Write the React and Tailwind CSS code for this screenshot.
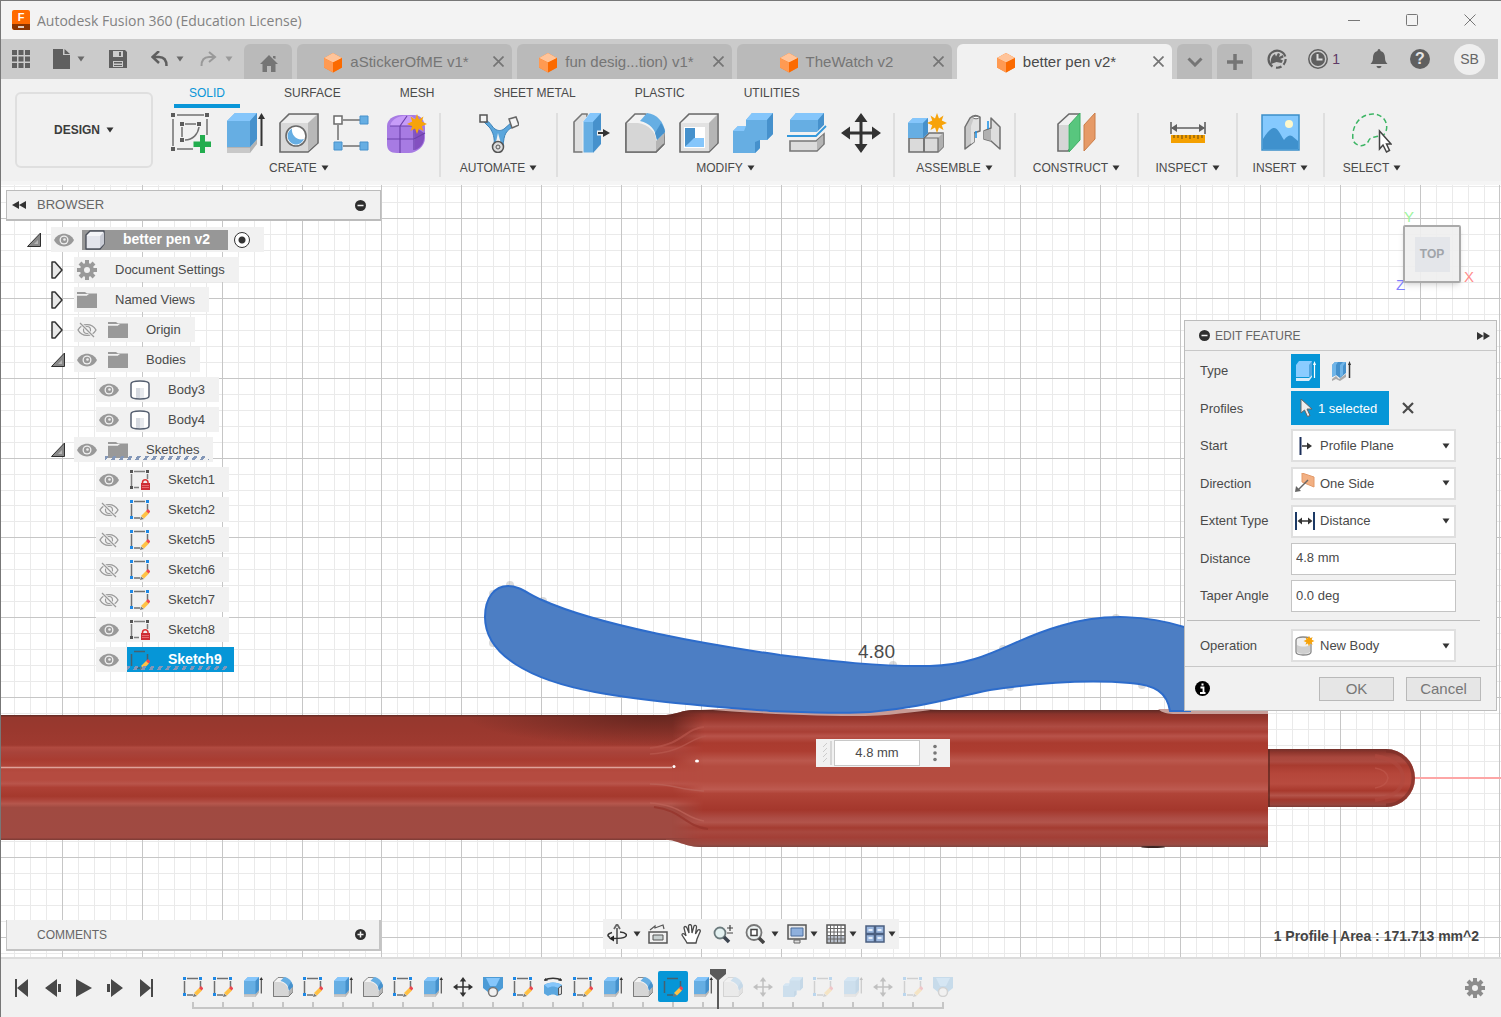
import React from "react";

const FONT = "font-['Liberation_Sans',Arial,sans-serif]";

/* ---------- small shared glyphs ---------- */

const Svg = ({ w = 20, h = 20, vb, children, className = "" }) => (
  <svg
    width={w}
    height={h}
    viewBox={vb || `0 0 ${w} ${h}`}
    fill="none"
    aria-hidden="true"
    className={`shrink-0 ${className}`}
  >
    {children}
  </svg>
);

const Caret = ({ color = "#333" }) => (
  <Svg w={8} h={6}>
    <path d="M.5.500H7.500L4 5.500Z" fill={color} />
  </Svg>
);

const Star = ({ x, y, s = 1 }) => (
  <path
    transform={`translate(${x} ${y}) scale(${s})`}
    d="M0-10 2-4.5 6.5-7.5 4.8-2.5 10 0 4.8 2.2 6.5 7 2 4.6 0 10-2 4.6-6.5 7-4.8 2.2-10 0-4.8-2.5-6.5-7.5-2-4.5Z"
    fill="#f7a30a"
  />
);

const Cube = () => (
  <Svg w={18} h={20}>
    <path d="M9 0 18 5V14.500L9 19.500 0 14.500V5Z" fill="#ff7a1a" />
    <path d="M9 0 18 5 9 9.500 0 5Z" fill="#ffc49a" />
    <path d="M0 5 9 9.500V19.500L0 14.500Z" fill="#ff9a52" />
    <path d="M18 5 9 9.500V19.500L18 14.500Z" fill="#fb6a00" />
  </Svg>
);

const Eye = () => (
  <Svg h={14}>
    <path d="M0 7C4-1.500 16-1.500 20 7 16 15.500 4 15.500 0 7Z" fill="#999" />
    <circle cx="10" cy="7" r="4.500" fill="#f1f1f1" />
    <circle cx="10" cy="7" r="3.200" fill="#999" />
    <circle cx="10.500" cy="6.500" r="1.300" fill="#eee" />
  </Svg>
);

const EyeOff = () => (
  <Svg h={16}>
    <path d="M1 8C5 .8 15 .8 19 8 15 15.200 5 15.200 1 8Z" stroke="#999" strokeWidth="1.300" />
    <circle cx="10" cy="8" r="3.500" stroke="#999" strokeWidth="1.200" />
    <path d="M3 1 17 15" stroke="#f1f1f1" strokeWidth="3" />
    <path d="M3 1 17 15" stroke="#999" strokeWidth="1.200" />
  </Svg>
);

const Folder = () => (
  <Svg h={16}>
    <path d="M0 0H8L10 1.500H20V16H0V3.500H10L12 2H0Z" fill="#999" />
    <path d="M0 3H10" stroke="#f1f1f1" />
  </Svg>
);

const Gear = ({ color = "#999" }) => (
  <Svg>
    <g stroke={color} strokeWidth="4">
      <path d="M10 0V20M0 10H20M3 3 17 17M17 3 3 17" />
    </g>
    <circle cx="10" cy="10" r="7" fill={color} />
    <circle cx="10" cy="10" r="3" fill="#f1f1f1" />
  </Svg>
);

const BodyIcon = () => (
  <Svg>
    <path d="M1 4C1 2 5 1 10 1S19 2 19 4V16C19 18 15 19 10 19S1 18 1 16Z" fill="#fff" stroke="#555f70" strokeWidth="1.500" />
    <path d="M6 8H10V18H6Z" fill="#d5d9e0" />
    <path d="M10 8H14V18H10Z" fill="#e8eaee" />
  </Svg>
);

const ComponentIcon = () => (
  <Svg>
    <path d="M1 5 5 1H19V14L15 19H1Z" fill="#f4f5f8" stroke="#4a4f5a" strokeWidth="1.400" strokeLinejoin="round" />
    <path d="M2 6H15V18H2Z" fill="#e3e5ec" />
    <path d="M15 6 19 2V14L15 18Z" fill="#c9ccd5" />
  </Svg>
);

const SketchIcon = ({ selected = false }) => (
  <Svg>
    <path d="M4 1.500H15M1.500 4V16M17.500 4V10M4 18H10" stroke={selected ? "#46616f" : "#707070"} strokeWidth="1.500" />
    {!selected && <path d="M0 0H3V3H0ZM16 0H19V3H16ZM0 16H3V19H0Z" fill="#1e88e5" />}
    <path d="M10 20 11 16.500 14 19Z" fill="#777" />
    <path d="M11 16 16.500 10.500 19 13.500 14 18.500Z" fill="#ffc145" />
    <path d="M16 11 18 9 20.500 11.500 18.500 13.500Z" fill="#ee4650" />
  </Svg>
);

const LockedSketch = () => (
  <Svg>
    <path d="M4 1.500H15M1.500 4V16M17.500 4V9M4 17.500H9" stroke="#808080" strokeWidth="1.500" />
    <path d="M0 0H3V3H0ZM16 0H19V3H16ZM0 16H3V19H0Z" fill="#555" />
    <path d="M12.500 14V12a2.800 2.800 0 0 1 5.500 0v2" stroke="#d33" strokeWidth="1.500" />
    <rect x="11" y="13" width="9" height="7" fill="#cc2f36" />
    <path d="M12 15.500H19M12 17.500H19" stroke="#e76b70" />
  </Svg>
);

const ClosedArrow = () => (
  <Svg w={12} h={18}>
    <path d="M1 1H4L11 9 4 17H1Z" fill="#e8e8e8" stroke="#333" strokeWidth="1.500" strokeLinejoin="round" />
  </Svg>
);

const OpenArrow = () => (
  <Svg w={14} h={15}>
    <path d="M13.500 1V14.500H.5Z" fill="#888" stroke="#2f2f2f" strokeWidth="1" strokeLinejoin="round" />
    <path d="M11 8V12H7Z" fill="#b5b5b5" />
  </Svg>
);

const RoundSign = ({ plus }) => (
  <Svg w={11} h={11}>
    <circle cx="5.500" cy="5.500" r="5.500" fill="#2e2e2e" />
    <path d={plus ? "M2.500 5.500H8.500M5.500 2.500V8.500" : "M2.500 5.500H8.500"} stroke="#f1f1f1" strokeWidth="1.500" />
  </Svg>
);

/* ---------- modelling icons (40 x 40 artwork) ---------- */

const art = {
  sketch: (
    <>
      <path d="M6 2H33M2 6V33M36 6V22M6 36H22" stroke="#707070" strokeWidth="1.500" />
      <path d="M0 0H4V4H0ZM34 0H38V4H34ZM0 34H4V38H0ZM9 9H13V13H9ZM26 9H30V13H26ZM9 25H13V29H9Z" fill="#5c5c5c" />
      <path d="M14 11H25M11 14V24M28 14C27 21 22 27 14 27" stroke="#707070" strokeWidth="1.500" />
      <path d="M29 22H34V28.500H40V34H34V40H29V34H22.500V28.500H29Z" fill="#22ad4e" />
    </>
  ),
  extrude: (
    <g transform="translate(2 0)">
      <path d="M0 34H23L30 26V31L23 40H0Z" fill="#b3b3b3" />
      <path d="M0 35H23V40H0Z" fill="#c8c8c8" />
      <path d="M0 8 8 0H30V26L23 34H0Z" fill="#66aee3" />
      <path d="M0 8 8 0H30L23 8Z" fill="#85c6fb" />
      <path d="M23 8 30 0V26L23 34Z" fill="#4691cc" />
      <path d="M34.500 5V33" stroke="#333" strokeWidth="2" />
      <path d="M34.500 0 38 6H31Z" fill="#333" />
    </g>
  ),
  hole: (
    <>
      <path d="M1 10 10 1H39V30L29 39H1Z" fill="#d8d8d8" stroke="#6a6a6a" strokeWidth="1.600" />
      <path d="M2 10 11 2H37L29 10Z" fill="#efefef" />
      <path d="M29 10 38 2V30L29 38Z" fill="#b8b8b8" />
      <circle cx="17" cy="23" r="10" fill="#fff" stroke="#6a6a6a" strokeWidth="1.600" />
      <path d="M13 15.500A8.500 8.500 0 1 0 25 26C18 28 12 22 13 15.500Z" fill="#66aee3" />
    </>
  ),
  pattern: (
    <>
      <path d="M10 7H27M5 12V27M10 33H27" stroke="#707070" strokeWidth="1.500" />
      <rect x="1" y="3" width="8" height="8" stroke="#6a6a6a" strokeWidth="1.500" fill="#fff" />
      <path d="M27 3H35V11H27ZM1 29H9V37H1ZM27 29H35V37H27Z" fill="#66aee3" stroke="#4691cc" />
    </>
  ),
  form: (
    <>
      <path d="M0 13C0 7 6 2 14 2H27C34 2 38 8 38 15V25C38 33 30 40 22 40H10C3 40 0 37 0 31Z" fill="#a77be3" />
      <path d="M4 10C8 4 14 2 24 3L32 9 26 13H3Z" fill="#c79cf8" />
      <path d="M28 14 37 20V26C36 32 33 35 28 37Z" fill="#8350c0" />
      <path d="M0 26H27L38 20M13 13V40M3 13H27V37M13 13 20 3" stroke="#6d42ab" strokeWidth="1.200" />
      <Star x={30} y={11} />
    </>
  ),
  automate: (
    <>
      <path d="M6 6C12 10 13 14 16 16 19 18 22 18 25 16L33 9 35 13C27 18 25 20 24 34L15 34C16 24 14 20 11 15L4 8Z" fill="#5ba6dc" stroke="#3d83b8" strokeWidth="1" />
      <path d="M19 20 21.500 29H17Z" fill="#f1f1f1" />
      <rect x="1" y="2" width="7" height="7" fill="#f5f5f5" stroke="#555" strokeWidth="1.500" />
      <path d="M30 6 37 4 40 12 33 15Z" fill="#f5f5f5" stroke="#666" strokeWidth="1.500" />
      <circle cx="19" cy="34" r="5.500" fill="#ddd" stroke="#555" strokeWidth="1.500" />
      <circle cx="19" cy="34" r="2" stroke="#555" />
    </>
  ),
  press: (
    <g transform="translate(2 0)">
      <path d="M1 9 9 1H14V39H1Z" fill="#e0e0e0" stroke="#777" strokeWidth="1.600" />
      <path d="M10 9 17 0H28V31L20 40H10Z" fill="#66aee3" stroke="#f1f1f1" />
      <path d="M10 9 17 0H28L20 9Z" fill="#85c6fb" />
      <path d="M20 9 28 0V31L20 40Z" fill="#4691cc" />
      <path d="M24 20H32" stroke="#f1f1f1" strokeWidth="5" />
      <path d="M25 20H31" stroke="#333" strokeWidth="2" />
      <path d="M30 16 37 20 30 24Z" fill="#333" />
    </g>
  ),
  fillet: (
    <>
      <path d="M1 10 10 1H20C32 3 39 12 39 24V31L31 39H1Z" fill="#f3f3f3" stroke="#6f6f6f" strokeWidth="1.600" />
      <path d="M1 10H13C23 11 31 19 31 27V39H1Z" fill="#d6d6d6" />
      <path d="M31 28 39 20V31L31 39Z" fill="#b5b5b5" />
      <path d="M15 8 22 0C32 1 39 9 40 19L32 27C31 17 25 10 15 8Z" fill="#66aee3" />
      <path d="M36 10C38 13 40 16 40 19L32 27 30 20Z" fill="#4691cc" />
      <path d="M1 10V39H31L39 31" stroke="#6f6f6f" strokeWidth="1.600" />
    </>
  ),
  shell: (
    <>
      <path d="M1 10 10 1H39V30L30 39H1Z" fill="#e2e2e2" stroke="#6a6a6a" strokeWidth="1.600" />
      <path d="M2 10 11 2H37L30 10Z" fill="#f2f2f2" />
      <path d="M30 10 38 2V30L30 38Z" fill="#b5b5b5" />
      <path d="M5 14H26V35H5Z" fill="#fff" />
      <path d="M6 15H16V26L6 34Z" fill="#4691cc" />
      <path d="M6 34 15 25H25V34Z" fill="#85c6fb" />
    </>
  ),
  combine: (
    <>
      <path d="M0 18 5 13H13V7L19 0H40V21L34 27H27V35L22 40H0Z" fill="#66aee3" />
      <path d="M13 7 19 0H40L34 7ZM0 18 5 13H13L11 18Z" fill="#85c6fb" />
      <path d="M34 7 40 0V21L34 27ZM22 29 27 27V35L22 40Z" fill="#4691cc" />
    </>
  ),
  split: (
    <>
      <path d="M3 7 9 0H37V13L31 19H3Z" fill="#66aee3" />
      <path d="M3 7 9 0H37L31 7Z" fill="#85c6fb" />
      <path d="M31 7 37 0V13L31 19Z" fill="#4691cc" />
      <path d="M0 23H29L39 13" stroke="#f1f1f1" strokeWidth="4.500" />
      <path d="M0 23H29L39 13" stroke="#3498db" strokeWidth="1.800" />
      <path d="M3 28H29L37 21V31L30 38H3Z" fill="#dcdcdc" stroke="#777" strokeWidth="1.600" />
      <path d="M30 28 36 22V31L30 37Z" fill="#b5b5b5" />
    </>
  ),
  move: (
    <>
      <path d="M20 6V34M6 20H34" stroke="#333" strokeWidth="3" />
      <path d="M20 0 26.500 9H13.500ZM20 40 13.500 31H26.500ZM0 20 9 13.500V26.500ZM40 20 31 26.500V13.500Z" fill="#333" />
    </>
  ),
  assemble: (
    <>
      <path d="M1 25H16V39H1ZM16 25 21 20H35V34L30 39H16Z" fill="#dadada" stroke="#6f6f6f" strokeWidth="1.600" />
      <path d="M30 25 35 20V34L30 39Z" fill="#b0b0b0" />
      <path d="M16 25V39M17 25H30V39" stroke="#6f6f6f" strokeWidth="1.200" />
      <path d="M0 10 5 5H20V20L15 25H0Z" fill="#66aee3" />
      <path d="M0 10 5 5H20L15 10Z" fill="#85c6fb" />
      <path d="M15 10 20 5V20L15 25Z" fill="#4691cc" />
      <Star x={29} y={10} />
    </>
  ),
  joint: (
    <>
      <path d="M3 14 8 5C11 2 15 2 18 4V18L12 20V29L3 36Z" fill="#c9c9c9" stroke="#707070" strokeWidth="1.500" strokeLinejoin="round" />
      <path d="M9 13 12 5 17 4V17L12 19V29L9 31Z" fill="#e2e2e2" />
      <ellipse cx="14" cy="4.500" rx="3" ry="1.300" fill="#fff" stroke="#707070" />
      <path d="M22 18 29 15V5L38 14V36L29 28 22 26Z" fill="#dedede" stroke="#707070" strokeWidth="1.500" strokeLinejoin="round" />
      <path d="M22 18 29 16V28L22 26Z" fill="#b0b0b0" />
      <path d="M26 8V16M14 18V25" stroke="#2294e6" strokeWidth="1.600" />
    </>
  ),
  construct: (
    <>
      <path d="M1 11 12 1H22V26L11 38H1Z" fill="#f0f0f0" stroke="#6a6a6a" strokeWidth="1.600" />
      <path d="M2 12H11V37H2Z" fill="#d6d6d6" />
      <path d="M12 12 23 0V27L12 39Z" fill="#58c67e" stroke="#3cae62" />
      <path d="M27 12 38 0V26L27 38Z" fill="#e69a67" stroke="#ca7d48" />
    </>
  ),
  inspect: (
    <>
      <path d="M3 9V21M37 9V21M4 15H36" stroke="#606060" strokeWidth="1.600" />
      <path d="M3 15 9 11V19ZM37 15 31 11V19Z" fill="#606060" />
      <path d="M3 22H37V30H3Z" fill="#f4a000" />
      <path d="M6 22V25M10 22V25M14 22V26M18 22V25M22 22V26M26 22V25M30 22V26M34 22V25" stroke="#7c5710" strokeWidth="1.200" />
    </>
  ),
  insert: (
    <>
      <path d="M1 2H38V37H1Z" fill="#85c9fe" stroke="#3b8ec9" strokeWidth="1.500" />
      <circle cx="28" cy="11" r="4" fill="#fdf8cc" />
      <path d="M2 26C6 19 10 15 13 15 17 15 19 21 23 27 27 22 29 22 31 23L37 28V36H2Z" fill="#3f91cd" />
    </>
  ),
  select: (
    <g transform="translate(-1 0)">
      <path d="M30 24C37 20 37 11 33 6 27-1 17 0 10 5 3 11 1 19 2 27 4 33 14 36 18 27 20 23 25 25 30 22" stroke="#3cb564" strokeWidth="1.500" strokeDasharray="5 3" />
      <path d="M28.500 18V36L32 32 35.500 39 38.500 37.500 35.500 31H40Z" fill="#fff" stroke="#444" strokeWidth="1.500" />
    </g>
  ),
  loft: (
    <>
      <path d="M0 0H40V22L30 30H10L0 22Z" fill="#4c9bd6" />
      <path d="M6 2H34L26 18H14Z" fill="#85c6fb" />
      <circle cx="20" cy="30" r="9" fill="#f1f1f1" stroke="#777" strokeWidth="3" />
    </>
  ),
  revolve: (
    <>
      <path d="M3 6C12 1 28 1 37 6" stroke="#333" strokeWidth="3" />
      <path d="M2 8 10 7 5 2ZM38 8 30 7 35 2Z" fill="#333" />
      <path d="M2 16C10 9 30 9 38 16V34L28 38C24 34 16 34 10 38L2 33Z" fill="#5ba7df" />
      <path d="M3 16C10 9 30 9 37 16L30 22C24 18 16 18 10 22Z" fill="#85c6fb" />
      <path d="M31 22 37 18V34L31 36Z" fill="#ddd" stroke="#555" strokeWidth="2" />
    </>
  ),
};

const Art = ({ name, size = 40 }) => (
  <Svg w={size} h={size} vb="0 0 40 40">
    {art[name]}
  </Svg>
);

/* ---------- title bar and document tabs ---------- */

function TitleBar() {
  return (
    <header className="flex h-[38px] shrink-0 items-center bg-[#f3f3f3] pl-[11px] pr-0.5">
      <Svg w={18} h={20}>
        <rect width="18" height="20" rx="2" fill="#ff6a00" />
        <path d="M0 14H18V20H2L0 18Z" fill="#8c3500" />
        <text x="9" y="11" textAnchor="middle" fontSize="11" fontWeight="bold" fill="#fff" fontFamily="Liberation Sans">F</text>
        <path d="M6 17H12" stroke="#fff" strokeWidth="1.500" />
      </Svg>
      <h1 className="ml-[7px] flex-1 font-['Open_Sans','Noto_Sans',sans-serif] text-[14px] text-[#828282]">
        Autodesk Fusion 360 (Education License)
      </h1>
      <div className="flex">
        {[
          ["Minimize", "M0 6.500H12"],
          ["Maximize", "M.5 1.500Q.5.500 1.500.500H10.500Q11.500.500 11.500 1.500V10.500Q11.500 11.500 10.500 11.500H1.500Q.500 11.500.500 10.500Z"],
          ["Close", "M.5.5 11.500 11.500M11.500.5.5 11.500"],
        ].map(([label, d]) => (
          <button key={label} aria-label={label} className="flex h-[38px] w-[58px] items-center justify-center">
            <Svg w={12} h={12}>
              <path d={d} stroke="#777" />
            </Svg>
          </button>
        ))}
      </div>
    </header>
  );
}

function DocTab({ name, active }) {
  return (
    <div
      className={
        "flex h-[35px] w-[215px] items-center rounded-t-md pl-3 " +
        (active ? "bg-[#f1f1f1] text-[#4a4a4a]" : "bg-[#bababa] text-[#757575]")
      }
    >
      <button className="flex flex-1 items-center justify-center gap-2 whitespace-nowrap pt-0.5 text-[15px]">
        <Cube />
        {name}
      </button>
      <button aria-label={`Close ${name}`} className="flex w-7 justify-center">
        <Svg w={11} h={11}>
          <path d="M.5.5 10.500 10.500M10.500.5.5 10.500" stroke="#757575" strokeWidth="1.700" />
        </Svg>
      </button>
    </div>
  );
}

function TabBar() {
  const c = "#5f5f5f";
  return (
    <nav className="mr-[3px] flex h-10 shrink-0 items-end bg-[#cbcbcb]">
      <div className="flex h-10 w-[243px] items-center pl-[11px]">
        <button aria-label="Data panel">
          <Svg w={18} h={18}>
            <path d="M0 0H5V5H0ZM6.500 0H11.500V5H6.500ZM13 0H18V5H13ZM0 6.500H5V11.500H0ZM6.500 6.500H11.500V11.500H6.500ZM13 6.500H18V11.500H13ZM0 13H5V18H0ZM6.500 13H11.500V18H6.500ZM13 13H18V18H13Z" fill={c} />
          </Svg>
        </button>
        <button aria-label="File" className="ml-[23px] flex items-center gap-[7px]">
          <Svg w={17} h={20}>
            <path d="M0 0H10V6H17V20H0Z" fill={c} />
            <path d="M11.500 0 17 5H11.500Z" fill={c} />
          </Svg>
          <Caret color="#6a6a6a" />
        </button>
        <button aria-label="Save" className="ml-6">
          <Svg w={18} h={18}>
            <path d="M0 0H16L18 2V18H0Z" fill={c} />
            <path d="M4 1H14V7H4ZM4 11H14V17H4Z" fill="#cbcbcb" />
            <path d="M10 2H12V6H10ZM5 12H13V13.500H5ZM5 15H13V16H5Z" fill={c} />
          </Svg>
        </button>
        <button aria-label="Undo" className="ml-6 flex items-center gap-2">
          <Svg w={17} h={16}>
            <path d="M2 6H8C13 6 15.500 9 15.500 15" stroke={c} strokeWidth="2.500" />
            <path d="M8 0 1.500 6 8 12" stroke={c} strokeWidth="2.500" />
          </Svg>
          <Caret color="#6a6a6a" />
        </button>
        <button aria-label="Redo" className="ml-4 flex items-center gap-2">
          <Svg w={17} h={16}>
            <path d="M15 6H9C4 6 1.500 9 1.500 15" stroke="#999" strokeWidth="2" />
            <path d="M9 1 15 6 9 11" stroke="#999" strokeWidth="2" />
          </Svg>
          <Caret color="#999" />
        </button>
      </div>
      <div className="flex flex-1 gap-[5px]">
        <button aria-label="Home" className="flex h-[35px] w-12 items-center justify-center rounded-t-md bg-[#bababa] pl-0.5 pt-1">
          <Svg w={18} h={17}>
            <path d="M9 0 18 9H15.500V17H11V11H7V17H2.500V9H0L9 0ZM13 1H15.500V4L13 3Z" fill="#757575" />
          </Svg>
        </button>
        <DocTab name="aStickerOfME v1*" />
        <DocTab name="fun desig...tion) v1*" />
        <DocTab name="TheWatch v2" />
        <DocTab name="better pen v2*" active />
        <button aria-label="Show all tabs" className="flex h-[35px] w-[35px] items-center justify-center rounded-t-md bg-[#bababa]">
          <Svg w={16} h={10}>
            <path d="M1.500 1.500 8 8 14.500 1.500" stroke="#757575" strokeWidth="3" />
          </Svg>
        </button>
        <button aria-label="New design" className="flex h-[35px] w-[35px] items-center justify-center rounded-t-md bg-[#bababa]">
          <Svg w={16} h={16}>
            <path d="M8 0V16M0 8H16" stroke="#757575" strokeWidth="3.500" />
          </Svg>
        </button>
      </div>
      <div className="flex h-10 items-center pr-[13px]">
        <button aria-label="Extensions" className="mr-[21px]">
          <Svg>
            <path d="M5.500 17.500A8.600 8.600 0 1 1 18.300 7.500" stroke={c} strokeWidth="2.200" />
            <path d="M18.700 10A8.600 8.600 0 0 1 16.500 15.800M14.500 17.500A8.600 8.600 0 0 1 9 18.700" stroke={c} strokeWidth="2.200" />
            <path d="M4 15C3 11 4.500 7 8 5L9 7.500 11 4 13 5 12 8 16 6 16.500 8.500 13 10 16 11.500 14.500 14 9.500 13Z" fill={c} />
          </Svg>
        </button>
        <button aria-label="Job status" className="mr-[30px] flex items-center gap-1 text-[14px] text-[#5f3a66]">
          <Svg>
            <circle cx="10" cy="10" r="9.200" stroke={c} strokeWidth="1.500" />
            <circle cx="10" cy="10" r="7" fill={c} />
            <path d="M9.500 5V10.500H14.500" stroke="#ddd" strokeWidth="2" />
          </Svg>
          1
        </button>
        <button aria-label="Notifications" className="mr-[22px]">
          <Svg w={18} h={20}>
            <path d="M9 0C10 0 10.500 1 10.500 2 14 3 15 6 15 9 15 12 16 13 17.500 15H.5C2 13 3 12 3 9 3 6 4 3 7.500 2 7.500 1 8 0 9 0ZM6.500 17H11.500C11 20 7 20 6.500 17Z" fill={c} />
          </Svg>
        </button>
        <button aria-label="Help" className="mr-6 flex size-5 items-center justify-center rounded-full bg-[#5f5f5f] text-[16px] font-bold leading-5 text-[#e4e4e4]">
          ?
        </button>
        <button className="size-[31px] rounded-full bg-[#efefef] text-[14px] text-[#666]">SB</button>
      </div>
    </nav>
  );
}

/* ---------- ribbon ---------- */

const groups = [
  { label: "CREATE", icons: ["sketch", "extrude", "hole", "pattern", "form"], w: "w-[282px]" },
  { label: "AUTOMATE", icons: ["automate"], w: "w-[117px]" },
  { label: "MODIFY", icons: ["press", "fillet", "shell", "combine", "split", "move"], w: "w-[337px]" },
  { label: "ASSEMBLE", icons: ["assemble", "joint"], w: "w-[121px]" },
  { label: "CONSTRUCT", icons: ["construct"], w: "w-[123px]" },
  { label: "INSPECT", icons: ["inspect"], w: "w-[99px]" },
  { label: "INSERT", icons: ["insert"], w: "w-[87px]" },
  { label: "SELECT", icons: ["select"], w: "w-[94px]" },
];

function Ribbon() {
  return (
    <section className="flex h-[106px] shrink-0 items-start border-b-4 border-[#f5f5f5] bg-[#f1f1f1] pl-[14px]">
      <button className="mt-[13px] flex h-[76px] w-[138px] items-center justify-center gap-1.5 rounded-md border-2 border-[#dfdfdf] text-[12px] font-bold text-[#3c3c3c]">
        DESIGN <Caret />
      </button>
      <div className="ml-1.5 flex-1">
        <div className="flex h-[29px] gap-[29px] pl-[15px]">
          {["SOLID", "SURFACE", "MESH", "SHEET METAL", "PLASTIC", "UTILITIES"].map((t, i) => (
            <button
              key={t}
              className={
                "whitespace-nowrap border-b-4 px-[15px] pt-0.5 text-[12px] " +
                (i === 0 ? "border-[#0a96d8] text-[#0a96d8]" : "border-transparent text-[#4a4a4a]")
              }
            >
              {t}
            </button>
          ))}
        </div>
        <div className="flex pt-[5px]">
          {groups.map((g, gi) => (
            <div
              key={g.label}
              className={
                "flex h-[64px] shrink-0 flex-col items-center gap-1.5 " +
                g.w +
                (gi < groups.length - 1 ? " border-r-2 border-[#dfdfdf]" : "")
              }
            >
              <div className="flex gap-[14px]">
                {g.icons.map((n) => (
                  <button key={n} aria-label={n} className="size-10">
                    <Art name={n} />
                  </button>
                ))}
              </div>
              <button className="flex items-center gap-1 text-[12px] leading-[18px] text-[#4a4a4a]">
                {g.label} <Caret />
              </button>
            </div>
          ))}
        </div>
      </div>
    </section>
  );
}

/* ---------- canvas drawing ---------- */

const X0 = 62;
const Y0 = 218;
const STEP = 15.972;

const leftStops = [
  [0, "#5f2a24"], [2, "#96382e"], [12, "#9a382e"], [24, "#9f3a30"], [26, "#b04a40"], [30, "#a8433a"],
  [36, "#a93c31"], [41, "#b04539"], [46, "#b54b40"], [52, "#b54b40"], [55, "#b9554b"], [58, "#ad4035"],
  [65, "#a5392d"], [68, "#ad453b"], [71, "#b5574d"], [74, "#a04a41"], [98, "#a04a42"], [100, "#7a3a34"],
];
const rightStops = [
  [0, "#5e2a25"], [3, "#8a332b"], [7, "#9b382e"], [12, "#ae4c43"], [16, "#a93f35"], [19, "#b8534a"],
  [24, "#aa3b2f"], [30, "#ad3d31"], [37, "#bb584d"], [41, "#b44c40"], [52, "#b54c40"], [58, "#bd5a50"],
  [61, "#b04438"], [73, "#a4372c"], [79, "#ad4d45"], [82, "#b2544b"], [86, "#a43c31"], [89, "#a8483f"],
  [93, "#a33f36"], [98, "#9c4b43"], [100, "#7d4741"],
];
const tipStops = [
  [0, "#74302a"], [6, "#8f362d"], [14, "#a8473d"], [22, "#ad4a40"], [28, "#a83b2f"], [42, "#b5463a"],
  [60, "#b84b3f"], [72, "#a8392d"], [80, "#b4544a"], [87, "#a3392e"], [96, "#98463e"], [100, "#7a3c36"],
];

const Grad = ({ id, stops }) => (
  <linearGradient id={id} gradientUnits="objectBoundingBox" x1="0" y1="0" x2="0" y2="1">
    {stops.map(([o, c]) => (
      <stop key={o} offset={`${o}%`} stopColor={c} />
    ))}
  </linearGradient>
);

function Scene() {
  const v = Array.from({ length: 94 }, (_, i) => i - 3);
  const h = Array.from({ length: 49 }, (_, i) => i - 2);
  const silhouette =
    "M0 715H666C678 714 682 710 694 710H1268V847H700C682 846 678 840 666 840H0Z";
  const blue =
    "M485 617C485 597 495 586 508 586C520 586 528 594 542 600C600 626 710 645 780 655C830 661 880 667 930 666C985 665 1010 640 1060 626C1105 612 1150 616 1184 627L1210 636H1190V711H1170C1167 692 1155 685 1130 683C1080 679 1030 684 990 690C950 698 920 708 870 712C840 714 800 712 770 711C710 706 640 701 595 692C530 680 485 655 485 617Z";
  return (
    <svg
      aria-hidden="true"
      fill="none"
      className="absolute inset-0 h-full w-full"
      viewBox="1 185 1500 772"
      preserveAspectRatio="xMidYMid slice"
    >
      <defs>
        <Grad id="barrelLeft" stops={leftStops} />
        <Grad id="barrelRight" stops={rightStops} />
        <Grad id="tip" stops={tipStops} />
        <radialGradient id="shade">
          <stop offset="0" stopColor="#5a221c" stopOpacity="0.8" />
          <stop offset="1" stopColor="#5a221c" stopOpacity="0" />
        </radialGradient>
        <linearGradient id="fade" gradientUnits="userSpaceOnUse" x1="672" y1="0" x2="704" y2="0">
          <stop offset="0" stopColor="#000" />
          <stop offset="1" stopColor="#fff" />
        </linearGradient>
        <mask id="fadeMask" maskUnits="userSpaceOnUse" x="660" y="700" width="620" height="160">
          <rect x="660" y="700" width="620" height="160" fill="url(#fade)" />
        </mask>
        <clipPath id="penClip">
          <path d={silhouette} />
        </clipPath>
        <clipPath id="tipClip">
          <path d="M1268 749H1386A29 29 0 0 1 1386 807H1268Z" />
        </clipPath>
      </defs>
      <rect x="0" y="185" width="1501" height="772" fill="#fff" />
      <g shapeRendering="crispEdges">
        {v.filter((i) => i % 5).map((i) => (
          <rect key={i} x={Math.round(X0 + i * STEP)} y="185" width="1" height="772" fill="#eaeaea" />
        ))}
        {h.filter((i) => i % 5).map((i) => (
          <rect key={i} x="0" y={Math.round(Y0 + i * STEP)} width="1501" height="1" fill="#eaeaea" />
        ))}
        {v.filter((i) => i % 5 === 0).map((i) => (
          <rect key={i} x={Math.round(X0 + i * STEP)} y="185" width="1" height="772" fill="#c6c6c6" />
        ))}
        {h.filter((i) => i % 5 === 0).map((i) => (
          <rect key={i} x="0" y={Math.round(Y0 + i * STEP)} width="1501" height="1" fill="#c6c6c6" />
        ))}
        <rect x="1400" y="777" width="101" height="2" fill="#fda6a6" />
      </g>

      <g clipPath="url(#tipClip)">
        <rect x="1268" y="749" width="150" height="58" fill="url(#tip)" />
        <path d="M1386 750A28 28 0 0 1 1386 806" stroke="#7c2f28" strokeWidth="5" opacity="0.600" />
        <path d="M1375 756Q1402 760 1403 778Q1402 796 1375 800" stroke="#b04a3f" strokeWidth="4" opacity="0.600" />
        <path d="M1375 768Q1387 770 1388 778Q1387 786 1375 788" stroke="#c25a4e" strokeWidth="1.500" opacity="0.600" />
        <path d="M1269 749V807" stroke="#5a2620" strokeWidth="2" opacity="0.700" />
      </g>

      <g clipPath="url(#penClip)">
        <rect x="0" y="715" width="720" height="125" fill="url(#barrelLeft)" />
        <rect x="666" y="705" width="50" height="11" fill="#7c2e26" />
        <rect x="666" y="839" width="50" height="10" fill="#94483f" />
        <ellipse cx="655" cy="716" rx="190" ry="30" fill="url(#shade)" />
        <rect x="660" y="710" width="608" height="137" fill="url(#barrelRight)" mask="url(#fadeMask)" />
        <path d="M650 748C684 744 684 729 704 727" stroke="#b7564c" strokeWidth="2" opacity="0.700" />
        <path d="M650 754C684 752 690 738 706 736" stroke="#b7564c" strokeWidth="1.500" opacity="0.800" />
        <path d="M650 784C672 784 680 790 704 791" stroke="#bc6258" strokeWidth="1.500" opacity="0.800" />
        <path d="M650 803C682 805 684 818 704 821" stroke="#bc6258" strokeWidth="1.500" opacity="0.800" />
        <path d="M654 807C682 810 684 826 708 829" stroke="#96352c" strokeWidth="2" opacity="0.800" />
      </g>
      <path d="M0 767.500H672" stroke="#dfa29a" strokeWidth="1.500" />
      <circle cx="674" cy="766.500" r="1.500" fill="#fff" />
      <ellipse cx="697" cy="761" rx="2" ry="1.500" fill="#fff" />
      <ellipse cx="1153" cy="847" rx="12" ry="1" fill="#3a2422" />

      <path d="M700 709C760 714 820 716 865 716C900 715 925 710 940 709Z" fill="#c99c96" />
      <path d="M1158 709H1268V714H1176C1168 714 1162 713 1158 709Z" fill="#c8a09b" />
      <g fill="#8a8a8a" opacity="0.300">
        <circle cx="510" cy="585" r="4" />
        <circle cx="543" cy="601" r="4" />
        <circle cx="493" cy="594" r="4" />
        <circle cx="493" cy="643" r="4" />
        <circle cx="893" cy="665" r="4" />
        <circle cx="1003" cy="649" r="4" />
        <circle cx="1116" cy="618" r="4" />
        <circle cx="1010" cy="687" r="4" />
        <circle cx="1142" cy="685" r="4" />
      </g>
      <path d={blue} fill="#4c7ec4" stroke="#2d6ccb" strokeWidth="2" />
      <text x="858" y="658" fontFamily="Liberation Sans" fontSize="19" fill="#4b4b4b">4.80</text>
    </svg>
  );
}

/* ---------- browser tree ---------- */

const hatch =
  "bg-[repeating-linear-gradient(120deg,#8397b8_0px,#8397b8_3px,transparent_3px,transparent_7px)]";

function TreeRow({ depth, open, eye, icon, label, selected, hatched, root }) {
  const indent = ["pl-[26px]", "pl-[50px]", "pl-[95px]"][depth];
  return (
    <li className={`flex h-[25px] items-center ${indent}`}>
      {open !== undefined && (
        <button aria-label={`Toggle ${label}`} className={depth === 0 ? "flex w-[24px]" : "flex w-[23px]"}>
          {open ? <OpenArrow /> : <ClosedArrow />}
        </button>
      )}
      <div className="flex h-[25px] items-center bg-[#f1f1f1] pl-[3px]">
        {eye !== undefined && (
          <button aria-label={`Visibility of ${label}`} className="mr-2 flex w-5">
            {eye ? <Eye /> : <EyeOff />}
          </button>
        )}
        <button
          className={
            "relative flex items-center whitespace-nowrap " +
            (eye !== undefined ? "pl-[3px] " : "") +
            (root
              ? "mr-1 h-5 bg-[#979797] pr-[18px] text-[14px] font-bold text-white"
              : selected
                ? "h-[25px] bg-[#0696d7] pr-3 text-[14px] font-bold text-white"
                : "h-[25px] pr-[14px] text-[13px] text-[#4a4a4a]")
          }
        >
          <span className="mr-[18px]">{icon}</span>
          {label}
          {hatched && <span className={`absolute bottom-0.5 left-0 right-1 h-1 ${hatch}`} />}
        </button>
        {root && (
          <label className="flex w-8 items-center pl-0.5">
            <input
              type="radio"
              defaultChecked
              aria-label="Activate component"
              className="size-4 appearance-none rounded-full border border-[#333] bg-[radial-gradient(circle,#333_3px,#fff_4px)]"
            />
          </label>
        )}
      </div>
    </li>
  );
}

const sketches = [
  ["Sketch1", true, true],
  ["Sketch2", false, false],
  ["Sketch5", false, false],
  ["Sketch6", false, false],
  ["Sketch7", false, false],
  ["Sketch8", true, true],
];

function Browser() {
  return (
    <aside className="absolute left-0 top-[5px] w-[380px]">
      <div className="ml-[5px] flex h-[31px] items-center border border-b-2 border-[#bcbcbc] bg-[#f1f1f1] pl-[5px] pr-[14px] text-[#666]">
        <button aria-label="Collapse browser">
          <Svg w={14} h={8}>
            <path d="M7 0V8L0 4ZM14 0V8L7 4Z" fill="#333" />
          </Svg>
        </button>
        <h2 className="ml-[11px] flex-1 text-[13px]">BROWSER</h2>
        <button aria-label="Browser options">
          <RoundSign />
        </button>
      </div>
      <ul className="mt-[6px] flex flex-col gap-[5px]">
        <TreeRow depth={0} open eye icon={<ComponentIcon />} label="better pen v2" root />
        <TreeRow depth={1} open={false} icon={<Gear />} label="Document Settings" />
        <TreeRow depth={1} open={false} icon={<Folder />} label="Named Views" />
        <TreeRow depth={1} open={false} eye={false} icon={<Folder />} label="Origin" />
        <TreeRow depth={1} open eye icon={<Folder />} label="Bodies" />
        <TreeRow depth={2} eye icon={<BodyIcon />} label="Body3" />
        <TreeRow depth={2} eye icon={<BodyIcon />} label="Body4" />
        <TreeRow depth={1} open eye icon={<Folder />} label="Sketches" hatched />
        {sketches.map(([name, shown, locked]) => (
          <TreeRow key={name} depth={2} eye={shown} icon={locked ? <LockedSketch /> : <SketchIcon />} label={name} />
        ))}
        <TreeRow depth={2} eye icon={<SketchIcon selected />} label="Sketch9" selected hatched />
      </ul>
    </aside>
  );
}

/* ---------- edit feature dialog ---------- */

const PlaneIcon = () => (
  <Svg>
    <path d="M5.500 1V19" stroke="#1c2f5a" strokeWidth="2" />
    <path d="M7 10H15" stroke="#333" strokeWidth="1.500" />
    <path d="M12 6.500 17 10 12 13.500Z" fill="#333" />
  </Svg>
);
const SideIcon = () => (
  <Svg>
    <path d="M7 0 19 4V14L7 9Z" fill="#f2b083" stroke="#e39a69" />
    <path d="M13 7 3 17" stroke="#666" strokeWidth="1.500" />
    <path d="M0 19 1 13 6 18Z" fill="#666" />
  </Svg>
);
const ExtentIcon = () => (
  <Svg>
    <path d="M1 1V19M19 1V19" stroke="#1c3a66" strokeWidth="2" />
    <path d="M4 10H16" stroke="#333" strokeWidth="1.500" />
    <path d="M2.500 10 7 6.500V13.500ZM17.500 10 13 6.500V13.500Z" fill="#333" />
  </Svg>
);
const NewBodyIcon = () => (
  <Svg>
    <path d="M1 4C1 2 4 1 8 1S16 2 16 4V16C16 18 12 19 8 19S1 18 1 16Z" fill="#f0f0f0" stroke="#888" strokeWidth="1.300" />
    <path d="M2 9C6 11 11 11 15 9V16C12 18.500 5 18.500 2 16Z" fill="#cfcfcf" />
    <Star x={14} y={5} s={0.550} />
  </Svg>
);

function SelectField({ id, icon, value }) {
  return (
    <div className="relative h-[33px] w-[165px] shrink-0">
      <select
        id={id}
        className="h-full w-full appearance-none border-2 border-[#dfdfdf] bg-white pl-[27px] text-[13px] text-[#4a4a4a]"
      >
        <option>{value}</option>
      </select>
      <span className="pointer-events-none absolute inset-y-0 left-1 flex items-center">{icon}</span>
      <span className="pointer-events-none absolute inset-y-0 right-1.5 flex items-center">
        <Caret />
      </span>
    </div>
  );
}

function TextField({ id, value }) {
  return (
    <input
      id={id}
      defaultValue={value}
      className="h-8 w-[165px] shrink-0 border border-[#c4c4c4] bg-white px-1 pb-0.5 text-[13px] text-[#4a4a4a]"
    />
  );
}

const Row = ({ label, id, children }) => (
  <div className="flex items-center">
    <label htmlFor={id} className="w-[91px] shrink-0 whitespace-nowrap text-[13px] text-[#4a4a4a]">
      {label}
    </label>
    {children}
  </div>
);

function EditFeature() {
  return (
    <section className="absolute right-1 top-[135px] w-[313px] border border-[#bcbcbc] bg-[#f1f1f1]">
      <div className="flex h-[30px] items-center border-b border-[#c8c8c8] pl-[14px] pr-1.5 text-[#666]">
        <button aria-label="Collapse">
          <RoundSign />
        </button>
        <h2 className="ml-[5px] flex-1 text-[12px]">EDIT FEATURE</h2>
        <button aria-label="Expand">
          <Svg w={13} h={8}>
            <path d="M0 0 6.500 4 0 8ZM6.500 0 13 4 6.500 8Z" fill="#333" />
          </Svg>
        </button>
      </div>
      <form onSubmit={(e) => e.preventDefault()}>
        <div className="grid h-[264px] auto-rows-fr pl-[15px] pt-px">
          <Row label="Type" id="type">
            <button id="type" aria-label="Extrude" className="flex h-[34px] w-[29px] items-center justify-center bg-[#0696d7]">
              <Svg>
                <path d="M0 17H13L16 14V16L13 20H0Z" fill="#d8ecf9" />
                <path d="M0 4 3 0H16V13L13 16H0Z" fill="#8accff" />
                <path d="M13 4 16 0V13L13 16Z" fill="#4fa4de" />
                <path d="M18.500 2V17" stroke="#fff" strokeWidth="1.200" />
                <path d="M18.500 0 20 4H17Z" fill="#fff" />
              </Svg>
            </button>
            <button aria-label="Thin extrude" className="ml-[11px]">
              <Svg>
                <path d="M1 18 5 15 8 18 15 13V16L9 20 5 18 1 20Z" fill="#aaa" />
                <path d="M1 4 4 1H15V12L9 17 5 14 1 16Z" fill="#4691cc" />
                <path d="M1 4 4 1H7L5 4V14L1 16ZM9 4 12 1H15L12 5V14L9 16Z" fill="#70b5e8" />
                <path d="M18.500 3V17" stroke="#333" strokeWidth="1.500" />
                <path d="M18.500 0 20 4H17Z" fill="#333" />
              </Svg>
            </button>
          </Row>
          <Row label="Profiles" id="profiles">
            <button id="profiles" className="flex h-[34px] w-[98px] items-center gap-1.5 whitespace-nowrap bg-[#0696d7] pl-[9px] text-[13px] text-white">
              <Svg w={12} h={18}>
                <path d="M1 0V14L4.500 11 7.500 17.500 10 16.500 7 10H12Z" fill="#eee" stroke="#666" />
              </Svg>
              1 selected
            </button>
            <button aria-label="Clear profiles" className="ml-[13px]">
              <Svg w={12} h={12}>
                <path d="M1 1 11 11M11 1 1 11" stroke="#4a4a4a" strokeWidth="2.200" />
              </Svg>
            </button>
          </Row>
          <Row label="Start" id="start">
            <SelectField id="start" icon={<PlaneIcon />} value="Profile Plane" />
          </Row>
          <Row label="Direction" id="direction">
            <SelectField id="direction" icon={<SideIcon />} value="One Side" />
          </Row>
          <Row label="Extent Type" id="extent">
            <SelectField id="extent" icon={<ExtentIcon />} value="Distance" />
          </Row>
          <Row label="Distance" id="distance">
            <TextField id="distance" value="4.8 mm" />
          </Row>
          <Row label="Taper Angle" id="taper">
            <TextField id="taper" value="0.0 deg" />
          </Row>
        </div>
        <hr className="ml-0.5 mr-4 mt-[5px] border-[#bcbcbc]" />
        <div className="flex h-[45px] items-center pl-[15px] pt-1">
          <Row label="Operation" id="operation">
            <SelectField id="operation" icon={<NewBodyIcon />} value="New Body" />
          </Row>
        </div>
        <div className="flex h-[44px] items-center border-t border-[#c8c8c8] pl-[10px] pr-[15px]">
          <button aria-label="Information" className="flex-1">
            <Svg w={15} h={15}>
              <circle cx="7.500" cy="7.500" r="7.500" fill="#000" />
              <path d="M5.500 6.500H8.500V12M5 12H10.500M6.500 3.500H8.500" stroke="#fff" strokeWidth="1.800" />
            </Svg>
          </button>
          <button className="h-6 w-[75px] border border-[#b9b9b9] bg-[#e6e6e6] text-[15px] leading-none text-[#777]">OK</button>
          <button className="ml-3 h-6 w-[75px] border border-[#b9b9b9] bg-[#e6e6e6] text-[15px] leading-none text-[#777]">Cancel</button>
        </div>
      </form>
    </section>
  );
}

/* ---------- canvas widgets ---------- */

function ViewCube() {
  return (
    <div className="absolute right-[23px] top-[22px] size-[82px]">
      <span className="absolute left-2 top-0 text-[15px] leading-5 text-[#9df59d]">Y</span>
      <span className="absolute -bottom-1 left-0 text-[15px] leading-4 text-[#7f7fff]">Z</span>
      <span className="absolute bottom-0.5 right-1 text-[15px] leading-5 text-[#ff8d8d]">X</span>
      <button className="absolute left-[7px] top-[18px] flex size-[58px] items-center justify-center rounded-xs border-2 border-[#aaa] bg-[#eeeeee]/90 shadow-md">
        <span className="flex size-[35px] items-center justify-center bg-[#e4e6ea] text-[12px] font-bold text-[#a0a4a9]">
          TOP
        </span>
      </button>
    </div>
  );
}

const navItems = [
  {
    label: "Orbit", gap: "gap-1.5", caret: true, art: (
      <>
        <path d="M10 20V4M7 5 10 0 13 5" stroke="#666" strokeWidth="1.800" />
        <path d="M5 8.500C0 10 0 12 3 13.500M13 8C19 8.500 21 11 18 13C16 14.500 11 14.500 6 14.500" stroke="#333" strokeWidth="1.500" />
        <path d="M2 14.500 7 11.500V17.500Z" fill="#222" />
      </>
    ),
  },
  {
    label: "Look at", art: (
      <>
        <path d="M1 8H19V19H1Z" fill="#f2f2f2" stroke="#555" strokeWidth="1.500" />
        <path d="M5 11H15V16H5Z" fill="#c8d0d0" stroke="#555" />
        <path d="M2 6 7 2V4L15 1 16 5" stroke="#555" strokeWidth="1.200" />
      </>
    ),
  },
  {
    label: "Pan", art: (
      <path d="M6 19C4 15 2 13 1 11 1 9 3 9 5 12L3 4C3 2 5 2 6 4L8 9 7.500 2C8 0 10 0 10.500 2L11 9 13 2C13.500 1 15.500 1 15.500 3L14.500 10 17 6C18 5 20 6 19 8L16 15 15 19Z" fill="#fff" stroke="#4a4a4a" strokeWidth="1.300" />
    ),
  },
  {
    label: "Zoom", art: (
      <>
        <circle cx="7" cy="9" r="5.500" fill="#e3f1f1" stroke="#6b7a7d" strokeWidth="1.800" />
        <path d="M11 13 16 18" stroke="#3c4550" strokeWidth="3.500" />
        <path d="M14 4H20M17 1V7M14 9H20" stroke="#444" strokeWidth="1.200" />
      </>
    ),
  },
  {
    label: "Fit", gap: "gap-1.5", caret: true, art: (
      <>
        <circle cx="9" cy="8.500" r="7.500" fill="#eef3f3" stroke="#777" strokeWidth="1.800" />
        <path d="M6 5.500H12V11.500H6Z" fill="#fff" stroke="#444" strokeWidth="1.500" />
        <path d="M14 14 19 19" stroke="#444" strokeWidth="3.500" />
      </>
    ),
  },
  {
    label: "Display settings", gap: "gap-[3px]", caret: true, art: (
      <>
        <path d="M1 1H19V15H1Z" fill="#e8e8e8" stroke="#555" strokeWidth="1.500" />
        <path d="M4 4H16V12H4Z" fill="#8fb0dd" stroke="#4d6e9e" />
        <path d="M7 16H13V19H7Z" fill="#ddd" stroke="#666" />
      </>
    ),
  },
  {
    label: "Grid and snaps", gap: "gap-[3px]", caret: true, art: (
      <>
        <path d="M1 1H19V19H1Z" fill="#fff" stroke="#555" strokeWidth="1.500" />
        <path d="M2 11H18V18H2Z" fill="#b9c0cc" />
        <path d="M4.500 1V19M8 1V19M11.500 1V19M15 1V19M1 4.500H19M1 8H19M1 11.500H19M1 15H19" stroke="#666" />
      </>
    ),
  },
  {
    label: "Viewports", gap: "gap-[3px]", caret: true, art: (
      <>
        <path d="M1 2H19V18H1Z" fill="#9bb7de" stroke="#4b5f80" strokeWidth="1.500" />
        <path d="M10 2V18M1 10H19" stroke="#4b5f80" strokeWidth="2.500" />
        <path d="M3.500 6H7.500M12.500 6H16.500M3.500 14H7.500M12.500 14H16.500" stroke="#e6eefa" strokeWidth="2" />
      </>
    ),
  },
];

const navGap = ["", "ml-[7px]", "ml-[13px]", "ml-3", "ml-3", "ml-2", "ml-2", "ml-2"];

function NavBar() {
  return (
    <div className="absolute bottom-2 left-1/2 flex h-[30px] w-[296px] -translate-x-1/2 items-center bg-[#f1f1f1] pl-[4px]">
      {navItems.map((n, i) => (
        <button key={n.label} aria-label={n.label} className={`flex items-center ${n.gap || ""} ${navGap[i]}`}>
          <Svg>{n.art}</Svg>
          {n.caret && <Caret />}
        </button>
      ))}
    </div>
  );
}

function Canvas() {
  return (
    <main className="relative min-h-0 flex-1 overflow-hidden">
      <Scene />
      <Browser />
      <div className="absolute bottom-1.5 left-[5px] flex h-[31px] w-[375px] items-center border-b-2 border-l border-r-2 border-[#c4c4c4] bg-[#f1f1f1] pl-[30px] pr-[13px] text-[#666]">
        <h2 className="flex-1 text-[12px]">COMMENTS</h2>
        <button aria-label="Expand comments">
          <RoundSign plus />
        </button>
      </div>
      <div className="absolute left-[815px] top-[554px] flex h-7 w-[134px] items-center bg-[#f1f1f1] pl-1.5">
        <Svg w={12} h={24}>
          <path d="M5 2 1 6M5 7 1 11M5 12 1 16M5 17 1 21" stroke="#ccc" />
          <path d="M9 0V24" stroke="#ccc" strokeWidth="1.500" />
        </Svg>
        <input
          aria-label="Extrude distance"
          defaultValue="4.8 mm"
          className="h-[26px] w-[86px] border border-[#c8c8c8] bg-white pb-0.5 text-center text-[13px] text-[#4a4a4a]"
        />
        <button aria-label="More options" className="flex flex-1 justify-center">
          <Svg w={4} h={18}>
            <circle cx="2" cy="2.500" r="1.800" fill="#777" />
            <circle cx="2" cy="9" r="1.800" fill="#777" />
            <circle cx="2" cy="15.500" r="1.800" fill="#777" />
          </Svg>
        </button>
      </div>
      <ViewCube />
      <EditFeature />
      <NavBar />
      <p className="absolute bottom-3 right-[22px] text-[14px] font-bold leading-[18px] text-[#444]">
        1 Profile | Area : 171.713 mm^2
      </p>
    </main>
  );
}

/* ---------- timeline ---------- */

const playback = [
  ["Go to start", "M1 0H3V18H1ZM3 9 14 0V18Z"],
  ["Step back", "M13 5H16V13H13ZM0 9 12 0V18Z"],
  ["Play", "M0 0 16 9 0 18Z"],
  ["Step forward", "M0 5H3V13H0ZM4 0 16 9 4 18Z"],
  ["Go to end", "M13 0H15V18H13ZM2 0 13 9 2 18Z"],
];

const steps = [
  "sk", "sk", "extrude", "fillet", "sk", "extrude", "fillet", "sk", "extrude", "move", "loft", "sk", "revolve",
  "sk", "extrude", "fillet", "sk", "extrude", "fillet", "move", "combine", "sk", "extrude", "move", "sk", "loft",
];

function Timeline() {
  return (
    <footer className="flex h-[60px] shrink-0 items-start border-t-2 border-[#dcdcdc] bg-[#f1f1f1] pl-[5px] pr-4">
      <div className="mt-[11px] flex h-9 items-center">
        {playback.map(([label, d]) => (
          <button key={label} aria-label={label} className="flex w-[31px] justify-center">
            <Svg w={16} h={18}>
              <path d={d} fill="#484848" />
            </Svg>
          </button>
        ))}
      </div>
      <div className="relative ml-[17px] mt-3">
        <ol className="flex">
          {steps.map((s, i) => (
            <li key={i} className="flex w-[30px] flex-col items-center">
              <button
                aria-label={`Timeline step ${i + 1}`}
                className={
                  "flex h-[31px] w-[30px] items-center justify-center rounded-xs " +
                  (i === 16 ? "bg-[#0696d7]" : i > 17 ? "opacity-25" : "")
                }
              >
                {s === "sk" ? <SketchIcon selected={i === 16} /> : <Art name={s} size={20} />}
              </button>
              <span className="h-[5px] w-0.5 bg-[#c6c6c6]" />
            </li>
          ))}
        </ol>
        <div className="mx-[14px] h-0.5 bg-[#c6c6c6]" />
        <Svg w={16} h={40} className="absolute -top-0.5 left-[532px]">
          <path d="M0 0H16V5L9 11V40H7V11L0 5Z" fill="#5a5a5a" />
        </Svg>
      </div>
      <button aria-label="Preferences" className="ml-auto mt-[19px]">
        <Gear color="#8c8c8c" />
      </button>
    </footer>
  );
}

export default function App() {
  return (
    <div className={`flex h-screen flex-col overflow-hidden border-l border-t border-[#777] bg-[#f1f1f1] ${FONT}`}>
      <TitleBar />
      <TabBar />
      <Ribbon />
      <Canvas />
      <Timeline />
    </div>
  );
}
